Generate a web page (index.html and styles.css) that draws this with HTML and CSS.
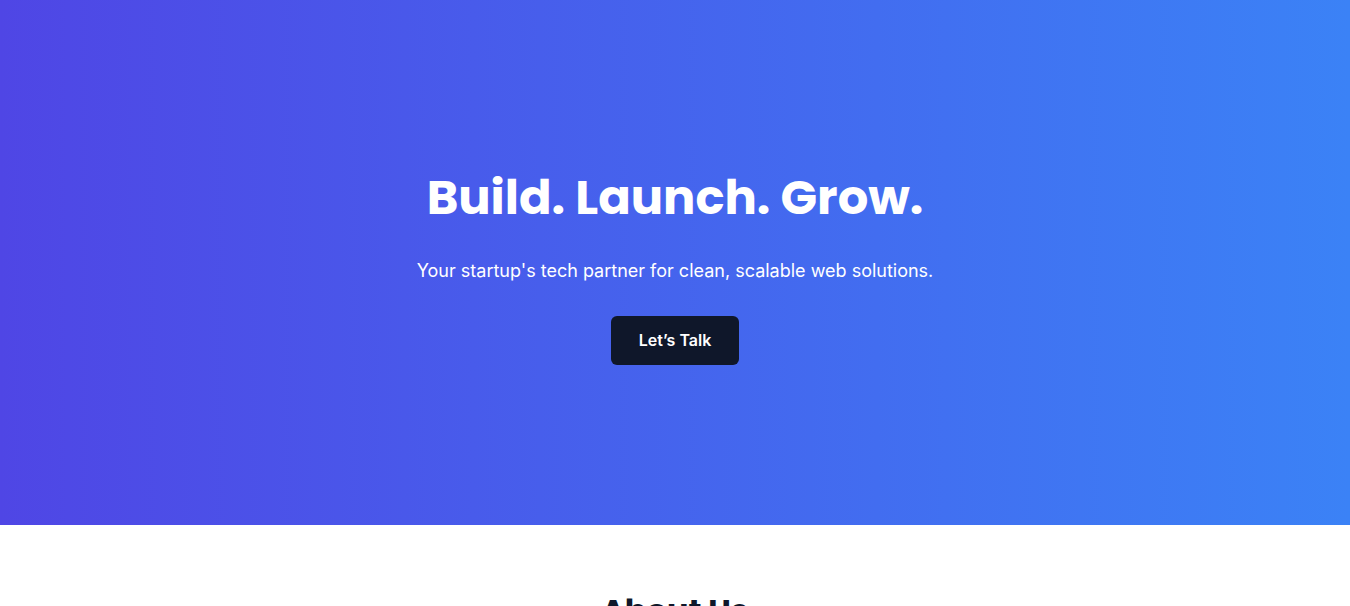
FILE: index.html
```html
<!DOCTYPE html>
<html lang="en">
<head>
<meta charset="utf-8">
<meta name="viewport" content="width=device-width, initial-scale=1">
<title>Build. Launch. Grow.</title>
<link rel="stylesheet" href="styles.css">
</head>
<body>
<header class="hero">
  <h1 class="hero-title">Build. Launch. Grow.</h1>
  <p class="hero-text">Your startup's tech partner for clean, scalable web solutions.</p>
  <a class="button" href="#about">Let’s Talk</a>
</header>
<section class="about" id="about">
  <h2 class="section-title">About Us</h2>
</section>
</body>
</html>
```

FILE: styles.css
```css
* {
  box-sizing: border-box;
}

body {
  margin: 0;
  background: #ffffff;
  color: #0f172a;
  font-family: Inter, sans-serif;
  line-height: 1.6;
}

.hero {
  display: flex;
  flex-direction: column;
  align-items: center;
  padding: 160px 20px;
  background: linear-gradient(to right, #4f46e5, #3b82f6);
  color: #ffffff;
  text-align: center;
}

.hero-title {
  margin: 0 0 20px;
  font-family: Poppins, Inter, sans-serif;
  font-size: 48px;
  font-weight: 700;
  line-height: 76px;
}

.hero-text {
  margin: 0 0 30px;
  font-size: 18px;
  line-height: 30px;
}

.button {
  padding: 12px 28px;
  border-radius: 6px;
  background: #0f172a;
  color: #ffffff;
  font-size: 16px;
  font-weight: 600;
  line-height: 25px;
  text-decoration: none;
}

.about {
  padding: 60px 20px;
  text-align: center;
}

.section-title {
  margin: 0;
  font-family: Poppins, Inter, sans-serif;
  font-size: 32px;
  font-weight: 700;
  line-height: 51px;
}
```
